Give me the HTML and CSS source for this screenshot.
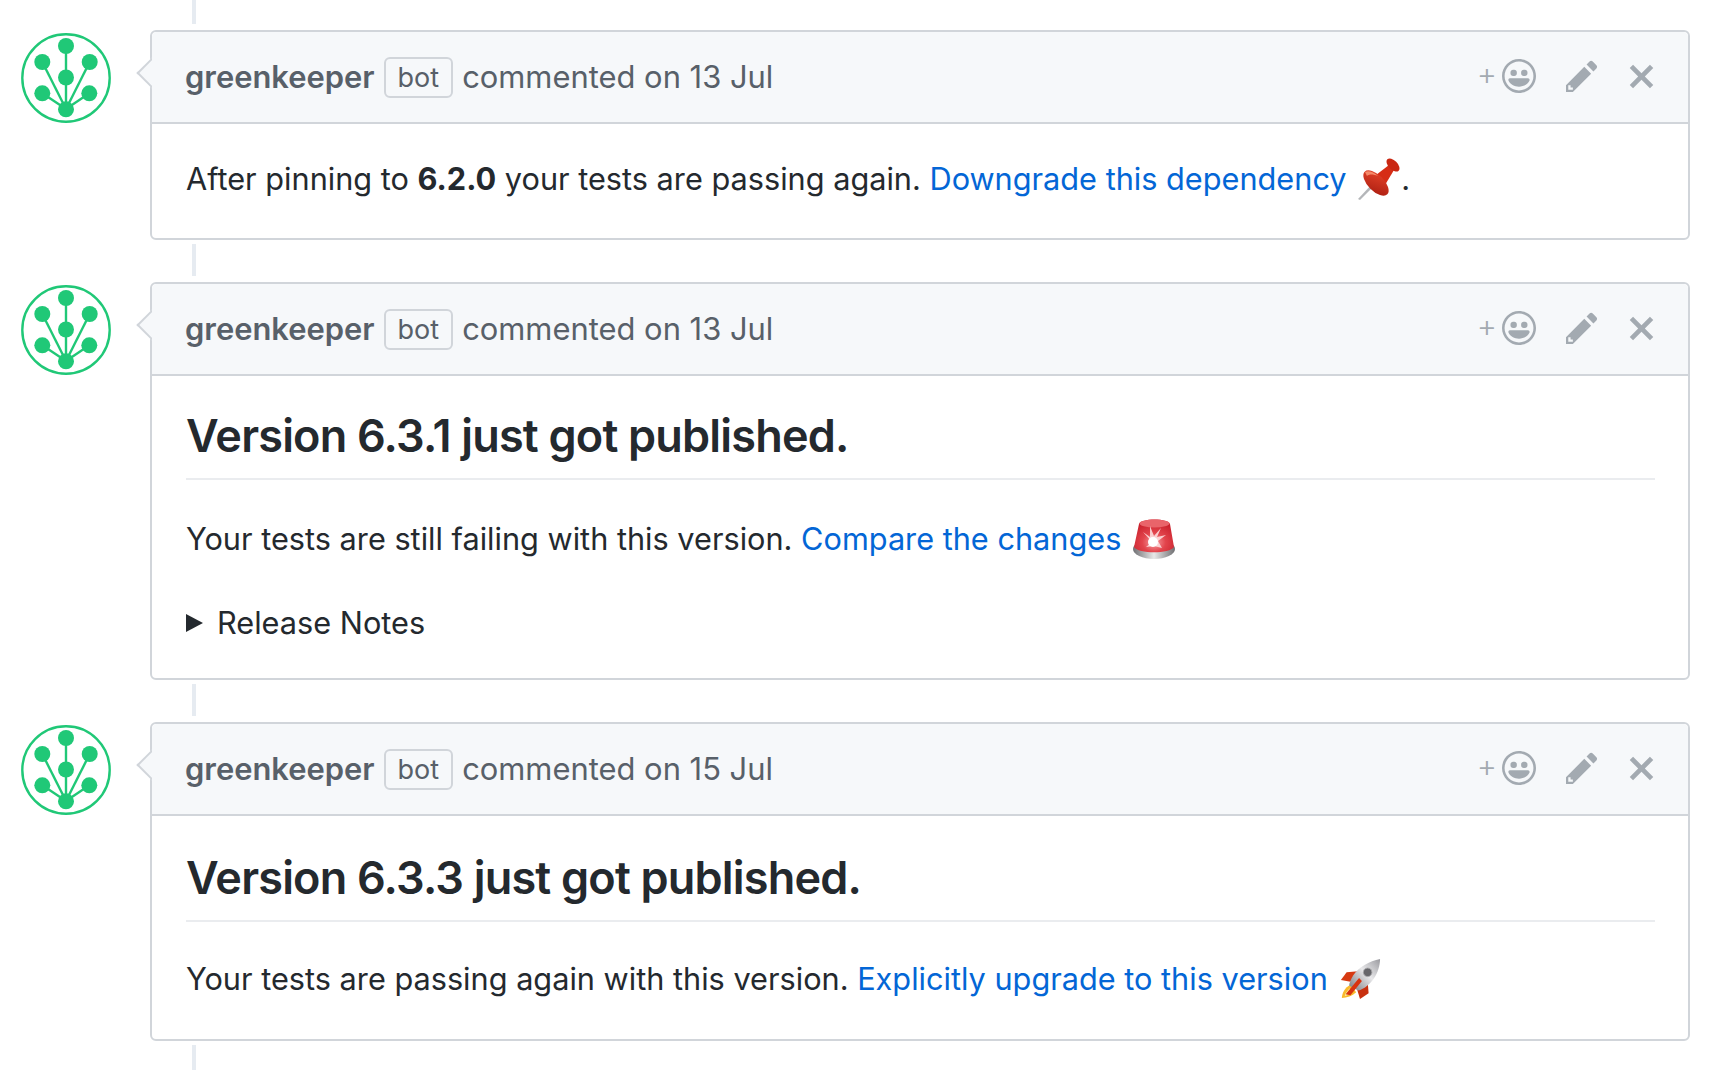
FILE: index.html
```html
<!DOCTYPE html>
<html lang="en">
<head>
  <meta charset="UTF-8" />
  <title>Greenkeeper comments</title>
  <link rel="stylesheet" href="styles.css">
</head>
<body>

  <!-- shared icons -->
  <svg class="icon-defs" xmlns="http://www.w3.org/2000/svg">
    <symbol id="logo" viewBox="0 0 90 90">
      <circle cx="45" cy="45" r="43.7" fill="none" stroke="#20c877" stroke-width="2.4"/>
      <g stroke="#20c877" stroke-width="2.4">
        <line x1="45" y1="13" x2="45" y2="76"/>
        <line x1="21.3" y1="29" x2="45" y2="76"/>
        <line x1="68.7" y1="29" x2="45" y2="76"/>
        <line x1="21.3" y1="60.3" x2="45" y2="76"/>
        <line x1="68.3" y1="60.3" x2="45" y2="76"/>
      </g>
      <g fill="#20c877">
        <circle cx="45" cy="13" r="8"/>
        <circle cx="21.3" cy="29" r="8"/>
        <circle cx="68.7" cy="29" r="8"/>
        <circle cx="45" cy="44.5" r="8"/>
        <circle cx="21.3" cy="60.3" r="8"/>
        <circle cx="68.3" cy="60.3" r="8"/>
        <circle cx="45" cy="76.3" r="8"/>
      </g>
    </symbol>
    <symbol id="smiley" viewBox="0 0 16 16">
      <path fill-rule="evenodd" d="M8 0C3.58 0 0 3.58 0 8s3.58 8 8 8 8-3.58 8-8-3.58-8-8-8zm4.81 12.81a6.72 6.72 0 0 1-2.17 1.45c-.83.36-1.72.53-2.64.53-.92 0-1.81-.17-2.64-.53-.81-.34-1.55-.83-2.17-1.45a6.773 6.773 0 0 1-1.45-2.17A6.59 6.59 0 0 1 1.21 8c0-.92.17-1.81.53-2.64.34-.81.83-1.55 1.45-2.17.62-.62 1.36-1.11 2.17-1.45A6.59 6.59 0 0 1 8 1.21c.92 0 1.81.17 2.64.53.81.34 1.55.83 2.17 1.45.62.62 1.11 1.36 1.45 2.17.36.83.53 1.72.53 2.64 0 .92-.17 1.81-.53 2.64-.34.81-.83 1.55-1.45 2.17zM4 6.8v-.59c0-.66.53-1.19 1.2-1.19h.59c.66 0 1.19.53 1.19 1.19v.59c0 .67-.53 1.2-1.19 1.2H5.2C4.53 8 4 7.47 4 6.8zm5 0v-.59c0-.66.53-1.19 1.2-1.19h.59c.66 0 1.19.53 1.19 1.19v.59c0 .67-.53 1.2-1.19 1.2h-.59C9.53 8 9 7.47 9 6.8zm4 3.2c-.72 1.88-2.91 3-5 3s-4.28-1.13-5-3c-.14-.39.23-1 .66-1h8.59c.41 0 .89.61.75 1z"/>
    </symbol>
    <symbol id="pencil" viewBox="0 0 14 14">
      <path fill-rule="evenodd" d="M0 11v3h3l8-8-3-3-8 8zm3 2H1v-2h1v1h1v1zm10.3-9.3L12 5 9 2l1.3-1.3a.996.996 0 0 1 1.41 0l1.59 1.59c.39.39.39 1.02 0 1.41z"/>
    </symbol>
    <symbol id="close" viewBox="0 0 12 12">
      <path d="M7.48 6l3.75 3.75-1.48 1.48L6 7.48l-3.75 3.75-1.48-1.48L4.52 6 .77 2.25l1.48-1.48L6 4.52l3.75-3.75 1.48 1.48L7.48 6z"/>
    </symbol>
  </svg>

  <div class="timeline">
    <div class="connector connector-top"></div>

    <!-- comment 1 -->
    <div class="comment">
      <svg class="avatar"><use href="#logo"/></svg>
      <div class="card">
        <div class="card-header">
          <div class="meta">
            <a class="author">greenkeeper</a>
            <span class="bot">bot</span>
            <span class="meta-text">commented on 13 Jul</span>
          </div>
          <div class="actions">
            <span class="plus">+</span>
            <svg class="icon-smiley"><use href="#smiley"/></svg>
            <svg class="icon-pencil"><use href="#pencil"/></svg>
            <svg class="icon-close"><use href="#close"/></svg>
          </div>
        </div>
        <div class="card-body">
          <p>After pinning to <strong>6.2.0</strong> your tests are passing again. <a href="#">Downgrade this dependency</a>
            <svg class="emoji" viewBox="0 0 44 42" xmlns="http://www.w3.org/2000/svg">
              <defs>
                <linearGradient id="pinRed" x1="0" y1="0" x2="1" y2="1">
                  <stop offset="0" stop-color="#e8452a"/>
                  <stop offset="1" stop-color="#a81c10"/>
                </linearGradient>
              </defs>
              <path d="M1 41 L16 25 L18 27 L3 42 Z" fill="#b4b6b9"/>
              <path d="M19 17 L32 7 L37 12 L28 27 Z" fill="#d62d16"/>
              <ellipse cx="36" cy="7" rx="8" ry="4.5" transform="rotate(45 36 7)" fill="#c92712"/>
              <ellipse cx="19" cy="25" rx="16" ry="8" transform="rotate(45 19 25)" fill="url(#pinRed)"/>
              <path d="M8 14 C11 12 17 14 21 18 C16 16 12 16 10 18 Z" fill="#f58a6a"/>
            </svg>.</p>
        </div>
      </div>
    </div>

    <div class="connector connector-mid"></div>

    <!-- comment 2 -->
    <div class="comment">
      <svg class="avatar"><use href="#logo"/></svg>
      <div class="card">
        <div class="card-header">
          <div class="meta">
            <a class="author">greenkeeper</a>
            <span class="bot">bot</span>
            <span class="meta-text">commented on 13 Jul</span>
          </div>
          <div class="actions">
            <span class="plus">+</span>
            <svg class="icon-smiley"><use href="#smiley"/></svg>
            <svg class="icon-pencil"><use href="#pencil"/></svg>
            <svg class="icon-close"><use href="#close"/></svg>
          </div>
        </div>
        <div class="card-body">
          <h2>Version 6.3.1 just got published.</h2>
          <p>Your tests are still failing with this version. <a href="#">Compare the changes</a>
            <svg class="emoji" viewBox="0 0 44 42" xmlns="http://www.w3.org/2000/svg">
              <defs>
                <linearGradient id="sirenBase" x1="0" y1="0" x2="1" y2="0">
                  <stop offset="0" stop-color="#6f6f72"/>
                  <stop offset="0.5" stop-color="#e8e8e8"/>
                  <stop offset="1" stop-color="#6f6f72"/>
                </linearGradient>
                <radialGradient id="sirenDome" cx="0.5" cy="0.7" r="0.65">
                  <stop offset="0" stop-color="#f8a0a4"/>
                  <stop offset="0.45" stop-color="#e2444c"/>
                  <stop offset="1" stop-color="#c91f2b"/>
                </radialGradient>
              </defs>
              <ellipse cx="22" cy="31" rx="21" ry="10" fill="url(#sirenBase)"/>
              <path d="M2 29 L7 6 C8 0 37 0 38 6 L42 29 C38 36 6 36 2 29 Z" fill="url(#sirenDome)"/>
              <ellipse cx="22.5" cy="5.5" rx="15" ry="4" fill="#e9646a"/>
              <path d="M20 24 L11 14 L18 19 L18 8 L22 18 L29 10 L25 19 L34 17 L26 23 L30 30 L22 28 L14 29 Z" fill="#fde4e4" opacity="0.85"/>
              <circle cx="21" cy="24" r="5" fill="#fff"/>
            </svg></p>
          <div class="release-notes">
            <span class="triangle"></span>
            <span>Release Notes</span>
          </div>
        </div>
      </div>
    </div>

    <div class="connector connector-mid"></div>

    <!-- comment 3 -->
    <div class="comment">
      <svg class="avatar"><use href="#logo"/></svg>
      <div class="card">
        <div class="card-header">
          <div class="meta">
            <a class="author">greenkeeper</a>
            <span class="bot">bot</span>
            <span class="meta-text">commented on 15 Jul</span>
          </div>
          <div class="actions">
            <span class="plus">+</span>
            <svg class="icon-smiley"><use href="#smiley"/></svg>
            <svg class="icon-pencil"><use href="#pencil"/></svg>
            <svg class="icon-close"><use href="#close"/></svg>
          </div>
        </div>
        <div class="card-body">
          <h2 class="heading-low">Version 6.3.3 just got published.</h2>
          <p>Your tests are passing again with this version. <a href="#">Explicitly upgrade to this version</a>
            <svg class="emoji" viewBox="0 0 44 44" xmlns="http://www.w3.org/2000/svg">
              <defs>
                <linearGradient id="rocketBody" x1="0" y1="1" x2="1" y2="0">
                  <stop offset="0" stop-color="#77777c"/>
                  <stop offset="0.55" stop-color="#e8e8ea"/>
                  <stop offset="1" stop-color="#9a9a9f"/>
                </linearGradient>
              </defs>
              <path d="M8 15 L2 23 L12 25 L20 14 Z" fill="#d63a12"/>
              <path d="M31 37 L22 43 L19 33 L30 24 Z" fill="#c8300f"/>
              <path d="M12 28 C6 31 3 37 3 42 C8 42 14 40 18 36 Z" fill="#f8b92c"/>
              <path d="M11 32 C8 35 6 38 6 40 C9 39 12 37 14 35 Z" fill="#fbe9a0"/>
              <path d="M43 1 C32 3 20 10 15 18 C12 23 10 28 11 29 L20 34 C26 33 34 26 38 19 C42 12 43 5 43 1 Z" fill="url(#rocketBody)"/>
              <circle cx="30" cy="15" r="4.5" fill="#66666a" stroke="#a9a9ac" stroke-width="1"/>
              <path d="M7 38 L21 21 L24 24 L12 39 Z" fill="#d8330f"/>
            </svg></p>
        </div>
      </div>
    </div>

    <div class="connector connector-bottom"></div>
  </div>

</body>
</html>
```

FILE: styles.css
```css
body {
  margin: 0;
  height: 1070px;
  overflow: hidden;
  background: #fff;
  font-family: Inter, "Liberation Sans", sans-serif;
  color: #24292e;
}
.icon-defs {
  display: none;
}
.timeline {
  display: flex;
  flex-direction: column;
  padding-left: 21px;
  width: 1669px;
}
.connector {
  width: 4px;
  margin-left: 171px;
  background: #e6ebf1;
}
.connector-top {
  height: 24px;
  margin-bottom: 6px;
}
.connector-mid {
  height: 32px;
  margin: 4px 0 6px 171px;
}
.connector-bottom {
  height: 30px;
  margin-top: 4px;
}
.comment {
  display: flex;
  gap: 39px;
  align-items: flex-start;
}
.avatar {
  width: 90px;
  height: 90px;
  flex-shrink: 0;
  margin-top: 3px;
}
.card {
  position: relative;
  flex: 1;
  border: 2px solid #d1d5da;
  border-radius: 6px;
}
.card::before {
  content: "";
  position: absolute;
  left: -11px;
  top: 30px;
  width: 22px;
  height: 22px;
  background: #f6f8fa;
  border-left: 2px solid #d1d5da;
  border-bottom: 2px solid #d1d5da;
  transform: rotate(45deg);
  box-sizing: border-box;
}
.card-header {
  position: relative;
  display: flex;
  justify-content: space-between;
  align-items: center;
  height: 90px;
  padding: 0 33px;
  background: #f6f8fa;
  border-bottom: 2px solid #d1d5da;
  border-radius: 5px 5px 0 0;
  color: #586069;
  font-size: 30.9px;
}
.meta {
  display: flex;
  align-items: center;
  gap: 9px;
}
.author {
  font-weight: 600;
  margin-top: -2px;
}
.meta-text {
  margin-top: -2px;
}
.bot {
  padding: 0 12px;
  height: 37px;
  line-height: 38px;
  border: 2px solid #d1d5da;
  border-radius: 6px;
  font-size: 27px;
}
.actions {
  display: flex;
  align-items: center;
  fill: #a3aab1;
  color: #a3aab1;
  margin-top: -2px;
}
.plus {
  font-size: 31px;
  font-weight: 300;
  margin-right: 5px;
  margin-top: -6px;
}
.icon-smiley {
  width: 34px;
  height: 34px;
  margin-right: 30px;
}
.icon-pencil {
  width: 32px;
  height: 32px;
  margin-right: 30px;
}
.icon-close {
  width: 27px;
  height: 27px;
}
.card-body {
  padding: 0 33px 0 34px;
  font-size: 30.7px;
}
.card-body p {
  margin: 0;
  padding: 31px 0 35px;
  line-height: 48px;
}
.card-body a {
  color: #0366d6;
  text-decoration: none;
}
.card-body strong {
  font-weight: 700;
}
.card-body h2 {
  margin: 0;
  padding: 33px 0 15px;
  font-size: 45px;
  line-height: 54px;
  font-weight: 600;
  letter-spacing: -0.8px;
  border-bottom: 2px solid #eaecef;
}
.card-body h2.heading-low {
  padding: 35px 0 15px;
}
.card-body h2 + p {
  padding: 35px 0 35px;
}
.card-body h2.heading-low + p {
  padding: 33px 0 36px;
}
.emoji {
  width: 44px;
  height: 42px;
  margin-left: 2px;
  vertical-align: -10px;
}
.release-notes {
  display: flex;
  align-items: center;
  gap: 14px;
  margin-top: 3px;
  padding-bottom: 33px;
  line-height: 44px;
}
.triangle {
  width: 0;
  height: 0;
  border-left: 17px solid #24292e;
  border-top: 9px solid transparent;
  border-bottom: 9px solid transparent;
}
```
